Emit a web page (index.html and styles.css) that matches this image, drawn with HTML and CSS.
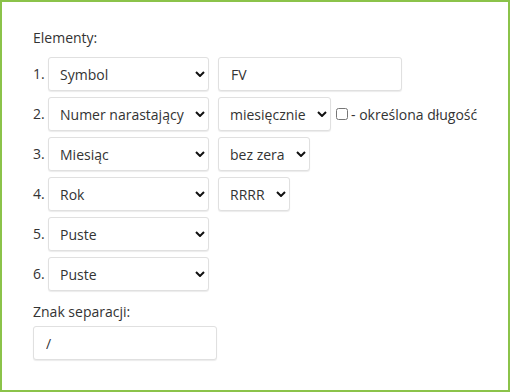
FILE: index.html
```html
<!DOCTYPE html>
<html lang="pl">
<head>
<meta charset="utf-8">
<link rel="stylesheet" href="styles.css">
</head>
<body>
<div class="frame">
  <div class="label">Elementy:</div>
  <div class="rows">
    <div class="row">
      <span class="num">1.</span>
      <span class="selwrap main"><select class="sel"><option>Symbol</option></select><svg class="chev" width="10" height="6" viewBox="0 0 10 6"><path d="M1 1 L5 5 L9 1" fill="none" stroke="#111" stroke-width="2"/></svg></span>
      <input class="inp" type="text" value="FV">
    </div>
    <div class="row">
      <span class="num">2.</span>
      <span class="selwrap main"><select class="sel"><option>Numer narastający</option></select><svg class="chev" width="10" height="6" viewBox="0 0 10 6"><path d="M1 1 L5 5 L9 1" fill="none" stroke="#111" stroke-width="2"/></svg></span>
      <span class="selwrap w-mies"><select class="sel"><option>miesięcznie</option></select><svg class="chev" width="10" height="6" viewBox="0 0 10 6"><path d="M1 1 L5 5 L9 1" fill="none" stroke="#111" stroke-width="2"/></svg></span>
      <label class="chk"><input type="checkbox"><span>- określona długość</span></label>
    </div>
    <div class="row">
      <span class="num">3.</span>
      <span class="selwrap main"><select class="sel"><option>Miesiąc</option></select><svg class="chev" width="10" height="6" viewBox="0 0 10 6"><path d="M1 1 L5 5 L9 1" fill="none" stroke="#111" stroke-width="2"/></svg></span>
      <span class="selwrap w-bez"><select class="sel"><option>bez zera</option></select><svg class="chev" width="10" height="6" viewBox="0 0 10 6"><path d="M1 1 L5 5 L9 1" fill="none" stroke="#111" stroke-width="2"/></svg></span>
    </div>
    <div class="row">
      <span class="num">4.</span>
      <span class="selwrap main"><select class="sel"><option>Rok</option></select><svg class="chev" width="10" height="6" viewBox="0 0 10 6"><path d="M1 1 L5 5 L9 1" fill="none" stroke="#111" stroke-width="2"/></svg></span>
      <span class="selwrap w-rrrr"><select class="sel"><option>RRRR</option></select><svg class="chev" width="10" height="6" viewBox="0 0 10 6"><path d="M1 1 L5 5 L9 1" fill="none" stroke="#111" stroke-width="2"/></svg></span>
    </div>
    <div class="row">
      <span class="num">5.</span>
      <span class="selwrap main"><select class="sel"><option>Puste</option></select><svg class="chev" width="10" height="6" viewBox="0 0 10 6"><path d="M1 1 L5 5 L9 1" fill="none" stroke="#111" stroke-width="2"/></svg></span>
    </div>
    <div class="row">
      <span class="num">6.</span>
      <span class="selwrap main"><select class="sel"><option>Puste</option></select><svg class="chev" width="10" height="6" viewBox="0 0 10 6"><path d="M1 1 L5 5 L9 1" fill="none" stroke="#111" stroke-width="2"/></svg></span>
    </div>
  </div>
  <div class="label sep-label">Znak separacji:</div>
  <input class="inp" type="text" value="/">
</div>
</body>
</html>
```
FILE: styles.css
```css
* { box-sizing: border-box; }
html, body { margin: 0; padding: 0; }
body {
  font-family: "Open Sans", "DejaVu Sans", sans-serif;
  font-size: 14px;
  color: #333;
  background: #fff;
}
.frame {
  width: 510px;
  height: 392px;
  border: 2px solid #8bc34a;
  padding: 26px 0 0 31px;
}
.label {
  line-height: 20px;
  height: 20px;
}
.rows {
  margin-top: 9px;
  display: flex;
  flex-direction: column;
  gap: 6px;
}
.row {
  display: flex;
  align-items: center;
  height: 34px;
}
.num {
  width: 15px;
  flex: none;
  line-height: 20px;
}
.selwrap {
  position: relative;
  display: block;
  height: 34px;
  flex: none;
}
.sel, .inp {
  display: block;
  height: 34px;
  border: 1px solid #e0e0e0;
  border-radius: 3px;
  box-shadow: 0 1px 1px rgba(0,0,0,0.08);
  background-color: #fff;
  font-family: "Open Sans", "DejaVu Sans", sans-serif;
  font-size: 14px;
  color: #333;
  padding: 0 6px 0 11px;
  margin: 0;
}
.sel {
  width: 100%;
  -webkit-appearance: none;
  appearance: none;
  outline: none;
}
.chev {
  position: absolute;
  right: 4px;
  top: 14px;
  pointer-events: none;
}
.selwrap.main { width: 161px; margin-right: 9px; }
.inp { width: 184px; padding-left: 12px; outline: none; }
.w-mies { width: 113px; }
.w-bez { width: 92px; }
.w-rrrr { width: 72px; }
.chk {
  display: flex;
  align-items: center;
  margin-left: 5px;
  color: #333;
}
.chk input {
  width: 12px;
  height: 12px;
  margin: 0 3px 0 0;
}
.sep-label { margin-top: 11px; }
.frame > .inp { margin-top: 4px; }
```
